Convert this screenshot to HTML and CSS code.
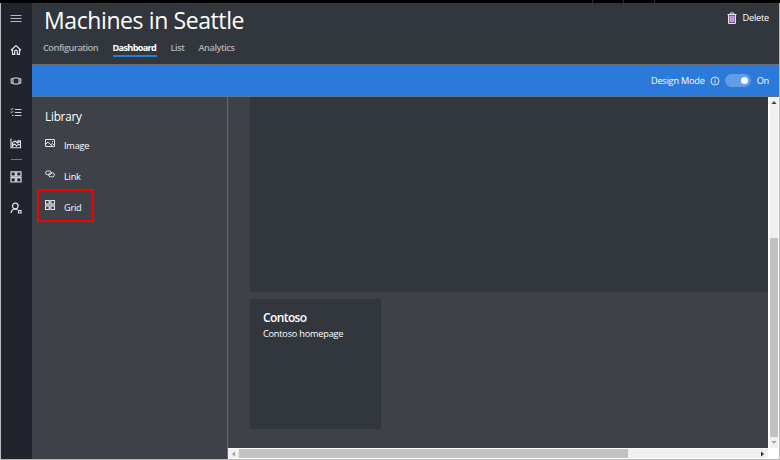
FILE: index.html
```html
<!DOCTYPE html>
<html lang="en">
<head>
<meta charset="utf-8">
<title>Machines in Seattle</title>
<link rel="stylesheet" href="styles.css">
</head>
<body>
<div class="app">
  <div class="topbar"><i></i><i></i><i></i></div>
  <div class="shell">
    <nav class="rail">
      <svg viewBox="0 0 12 12"><path d="M.5 3.500h11M.5 6.500h11M.5 9.500h11" stroke="#b9bbbf"/></svg>
      <svg viewBox="0 0 12 12"><path d="M1 7.200 6 2.500l5 4.700M2.500 6.200v5.200h2.200V8.200q0-1 1.300-1t1.300 1v3.200h2.200V6.200" stroke-width="1.200"/></svg>
      <svg viewBox="0 0 12 12"><rect x="3" y="3" width="6" height="6" rx="1"/><path d="M3 3.800H1.200v4.400H3M9 3.800h1.800v4.400H9"/></svg>
      <svg viewBox="0 0 12 12"><path d="m.6 3 .9.9L3.300 2M.6 6l.9.9L3.300 5M4.800 3.500h6.700M4.800 6.500h6.700M4.800 9.500h6.700M2 9.500h1.500" stroke-width=".9"/></svg>
      <svg viewBox="0 0 12 12"><path d="M1 1.500v9.300h10.200M2.500 10V5.500L5 4l2.500 2L10.500 4v6.500M2.500 8.500l2-1.500L6.500 9l2-1.700 2 .9M7 4.500l1.500-1 1.800.7" stroke-width="1.100"/></svg>
      <hr>
      <svg viewBox="0 0 12 12"><path d="M1 .8h4.300v4.400H1zM6.700.8H11v4.400H6.700zM1 6.700h4.300V11H1zM6.700 6.700H11V11H6.700z" stroke="#e2daea" stroke-width="1.200"/></svg>
      <svg viewBox="0 0 12 12"><circle cx="5.300" cy="4" r="2.800" stroke-width="1.200"/><path d="M1 11c.3-2.200 1.700-3.800 4.300-4.100 1 0 1.700.3 2.400.9M8.500 8.500H11V11H8.500z" stroke-width="1.200"/></svg>
    </nav>
    <main class="main">
      <header class="header">
        <div class="heading">
          <h1>Machines in Seattle</h1>
          <div class="tabs"><span class="t-config">Configuration</span><span class="active">Dashboard</span><span class="t-list">List</span><span class="t-analytics">Analytics</span></div>
        </div>
        <div class="delete">
          <svg viewBox="0 0 10 12"><path d="M2.200 3.500h5.600v7H2.200z" fill="#b58ad0" stroke="none"/><path d="M.5 2.500h9M3.300 2.300V1h3.400v1.300M1.500 2.700v8.800h7V2.700"/><path d="M3.800 4.200v5.500M6.200 4.200v5.500" stroke="#d4b9df" stroke-width=".7"/></svg>
          <span>Delete</span>
        </div>
      </header>
      <div class="mode">
        <span>Design Mode</span>
        <svg viewBox="0 0 10 10"><circle cx="5" cy="5" r="4"/><path d="M5 4.300v3M5 2.500v1"/></svg>
        <b class="toggle"></b>
        <span class="on">On</span>
      </div>
      <div class="content">
        <aside class="library">
          <h2>Library</h2>
          <div class="item"><svg viewBox="0 0 10 10"><path d="M.5 1.500h9v7h-9zM1 6l2-2L7.500 8.500M6 6.500l1.300-1L9 7M7 3.500h1"/></svg><span>Image</span></div>
          <div class="item"><svg viewBox="0 0 10 10"><rect x=".6" y="2" width="5.700" height="3.700" rx="1.850"/><rect x="3.600" y="4" width="5.800" height="3.800" rx="1.900"/></svg><span>Link</span></div>
          <div class="item selected"><svg viewBox="0 0 10 10"><path d="M.5.5h3.700v3.700H.5zM5.800.5h3.700v3.700H5.800zM.5 5.800h3.700v3.700H.5zM5.800 5.800h3.700v3.700H5.800z" stroke-width="1.200"/></svg><span>Grid</span></div>
        </aside>
        <section class="viewport">
          <div class="canvas">
            <div class="tile-large"></div>
            <div class="tile"><h3>Contoso</h3><p>Contoso homepage</p></div>
          </div>
          <div class="vscroll">
            <svg viewBox="0 0 8 11"><path d="M1.500 7 4 4l2.500 3z" fill="#404040"/></svg>
            <div class="vthumb"></div>
            <svg viewBox="0 0 8 11"><path d="M1.500 4h5L4 7z" fill="#a0a0a0"/></svg>
          </div>
          <div class="hscroll">
            <svg viewBox="0 0 11 8"><path d="M7 1.500v5L4 4z" fill="#a0a0a0"/></svg>
            <div class="hthumb"></div>
            <svg viewBox="0 0 11 8"><path d="M4 1.500v5L7 4z" fill="#303030"/></svg>
          </div>
          <div class="corner"></div>
        </section>
      </div>
    </main>
  </div>
</div>
</body>
</html>
```
FILE: styles.css
```css
* { box-sizing: border-box; }
body { margin: 0; font-family: "Open Sans", "Noto Sans", sans-serif; color: #fff; font-size: 9.200px; letter-spacing: -.22px; }
h1, h2, h3, p { margin: 0; }
svg { display: block; flex: none; fill: none; stroke: #e4e3e8; stroke-width: 1; }
.app { width: 780px; height: 460px; display: flex; flex-direction: column; background: #3e4148; overflow: hidden; }
.topbar { height: 3px; background: #000; display: flex; justify-content: flex-end; gap: 30px; padding-right: 125px; }
.topbar i { width: 1px; background: #303030; }
.shell { flex: 1; display: flex; min-height: 0; border: 1px solid #b8b9bb; border-top: 0; }
.rail { width: 31px; background: #21242c; display: flex; flex-direction: column; align-items: center; padding: 9px 1px 0 0; gap: 19.300px; }
.rail svg { width: 12px; height: 12px; }
.rail hr { width: 11px; height: 1px; border: 0; background: #777980; margin: -9px 0; }
.main { flex: 1; min-width: 0; display: flex; flex-direction: column; }
.header { height: 62px; background: #32373e; border-bottom: 1px solid #66696d; display: flex; justify-content: space-between; padding: 0 10px 0 11px; }
h1 { font-size: 23px; font-weight: 400; line-height: 34px; height: 34px; letter-spacing: -.4px; white-space: nowrap; margin-left: 1px; }
.tabs { display: flex; line-height: 15px; margin-top: 3px; color: #afb1b4; font-weight: 600; font-size: 9.200px; white-space: nowrap; }
.tabs span { height: 16px; margin-right: 14px; letter-spacing: -.45px; }
.tabs .active { width: 44px; color: #fff; font-weight: 700; letter-spacing: -.7px; border-bottom: 1px solid #2b7bdb; box-shadow: 0 1px #2b7bdb; }
.tabs .t-config { width: 55.500px; }
.tabs .t-list { width: 14px; }
.delete { display: flex; align-items: center; gap: 6px; height: 29px; }
.delete svg { width: 10px; height: 12px; }
.mode { height: 32px; background: #2b79d8; border-bottom: 1px solid #62748c; display: flex; align-items: center; justify-content: flex-end; padding-right: 10px; gap: 5px; }
.mode svg { width: 10px; height: 10px; stroke: #d7e5fa; }
.toggle { width: 26px; height: 13px; border-radius: 7px; background: #609de3; padding: 3px; display: flex; justify-content: flex-end; }
.toggle::after { content: ""; width: 7px; height: 7px; border-radius: 50%; background: #fff; }
.content { flex: 1; min-height: 0; display: flex; }
.library { width: 196px; border-right: 1px solid #696c70; padding: 9px 0 0 5px; }
h2 { font-size: 11.700px; font-weight: 400; line-height: 21px; margin-left: 8px; height: 21px; letter-spacing: -.2px; }
.item { display: flex; align-items: center; gap: 9.500px; width: 57px; height: 33px; padding-left: 7.500px; margin-bottom: -2px; }
.item svg { width: 10px; height: 10px; margin-top: -1px; }
.item span { padding-top: 3px; }
.selected { border: 2px solid #f60000; padding-left: 5.500px; }
.mode .on { margin-left: 1px; }
.viewport { flex: 1; min-width: 0; display: grid; grid-template-columns: 540px 11px; grid-template-rows: 351px 11px; }
.canvas { padding-left: 22px; overflow: hidden; }
.tile-large { height: 195px; background: #32373e; margin-bottom: 7px; }
.tile { width: 131px; height: 130px; background: #32373e; padding: 10px 13px; white-space: nowrap; }
h3 { font-size: 12px; font-weight: 600; line-height: 17px; letter-spacing: -.6px; }
.tile p { font-size: 9.200px; line-height: 16px; }
.vscroll, .hscroll { background: #f0f0f0; display: flex; }
.vscroll { flex-direction: column; align-items: center; border-left: 2px solid #fff; border-right: 1px solid #fff; }
.vscroll svg { width: 8px; height: 11px; stroke: none; }
.vthumb { width: 8px; height: 199px; margin-top: auto; background: #c1c1c1; }
.hscroll { align-items: center; border: solid #fff; border-width: 1px 0; }
.hscroll svg { width: 11px; height: 8px; stroke: none; }
.hthumb { width: 389px; height: 9px; background: #c1c1c1; margin-right: auto; }
.corner { background: #fff; }
```
